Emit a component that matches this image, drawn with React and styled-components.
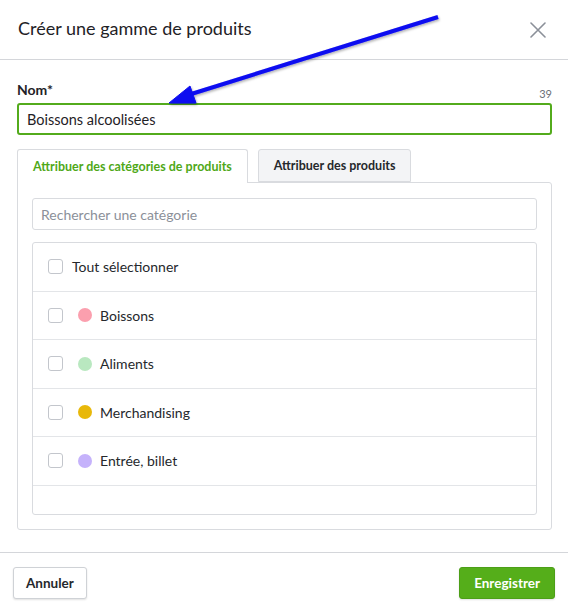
import React from "react";
import styled, { createGlobalStyle } from "styled-components";

const GlobalStyle = createGlobalStyle`
  html, body {
    margin: 0;
    padding: 0;
    background: #fff;
  }
  body {
    font-family: "Lato", "Liberation Sans", sans-serif;
    color: #25282c;
  }
  * {
    box-sizing: border-box;
  }
`;

const categories = [
  { name: "Boissons", color: "#fb9fae" },
  { name: "Aliments", color: "#b9e8c0" },
  { name: "Merchandising", color: "#e8b80a" },
  { name: "Entrée, billet", color: "#c5b2fb" },
];

export default function App() {
  return (
    <Modal>
      <GlobalStyle />
      <Header>
        <Title>Créer une gamme de produits</Title>
        <CloseButton aria-label="Fermer">
          <svg width="16" height="16" viewBox="0 0 16 16">
            <path
              d="M1 1 L15 15 M15 1 L1 15"
              stroke="#8b9099"
              strokeWidth="1.6"
              strokeLinecap="round"
            />
          </svg>
        </CloseButton>
      </Header>

      <Body>
        <LabelRow>
          <Label>Nom*</Label>
          <Counter>39</Counter>
        </LabelRow>
        <NameInput defaultValue="Boissons alcoolisées" />

        <Tabs>
          <Tab active>Attribuer des catégories de produits</Tab>
          <Tab>Attribuer des produits</Tab>
        </Tabs>
        <TabPanel>
          <SearchInput placeholder="Rechercher une catégorie" />
          <List>
            <Row>
              <Checkbox />
              <RowText>Tout sélectionner</RowText>
            </Row>
            {categories.map((item) => (
              <Row key={item.name}>
                <Checkbox />
                <Dot color={item.color} />
                <RowText>{item.name}</RowText>
              </Row>
            ))}
            <EmptyRow />
          </List>
        </TabPanel>
      </Body>

      <Footer>
        <Button>Annuler</Button>
        <Button primary>Enregistrer</Button>
      </Footer>

      <Arrow width="568" height="120" viewBox="0 0 568 120">
        <defs>
          <filter id="shadow" x="-10%" y="-50%" width="120%" height="200%">
            <feDropShadow dx="1" dy="1.5" stdDeviation="1" floodColor="#000" floodOpacity="0.3" />
          </filter>
        </defs>
        <g filter="url(#shadow)" fill="#0a0af0" stroke="#0a0af0">
          <line x1="438" y1="17" x2="188" y2="95" strokeWidth="4" />
          <polygon points="169,103 190,86 196,103" strokeWidth="1" strokeLinejoin="round" />
        </g>
      </Arrow>
    </Modal>
  );
}

const Modal = styled.div`
  position: relative;
  width: 568px;
  height: 610px;
  display: flex;
  flex-direction: column;
  background: #fff;
`;

const Header = styled.div`
  height: 60px;
  display: flex;
  align-items: center;
  justify-content: space-between;
  padding: 0 22px 0 18px;
  border-bottom: 1px solid #d4d6da;
`;

const Title = styled.h1`
  margin: 0 0 3px;
  font-size: 18px;
  font-weight: 400;
  color: #1f2226;
`;

const CloseButton = styled.button`
  border: 0;
  background: none;
  padding: 0;
  display: flex;
  cursor: pointer;
`;

const Body = styled.div`
  padding: 21px 16px 0 17px;
  display: flex;
  flex-direction: column;
`;

const LabelRow = styled.div`
  display: flex;
  justify-content: space-between;
  align-items: flex-end;
  height: 19px;
  margin-bottom: 3px;
`;

const Label = styled.span`
  font-size: 14px;
  font-weight: 700;
  color: #1f2226;
  line-height: 14px;
  margin-bottom: 3px;
`;

const Counter = styled.span`
  font-size: 11px;
  color: #6c7079;
  line-height: 12px;
`;

const NameInput = styled.input`
  width: 100%;
  height: 32px;
  border: 2px solid #53ab1c;
  border-radius: 3px;
  padding: 0 8px;
  font-family: inherit;
  font-size: 14.5px;
  color: #1f2226;
  outline: none;
`;

const Tabs = styled.div`
  display: flex;
  gap: 10px;
  margin-top: 14px;
  position: relative;
  z-index: 1;
`;

const Tab = styled.div`
  height: ${(p) => (p.active ? "34px" : "33px")};
  padding: 0 15px;
  display: flex;
  align-items: center;
  font-size: 12.5px;
  font-weight: 700;
  border: 1px solid #d9dbdf;
  border-bottom: ${(p) => (p.active ? "0" : "1px solid #d9dbdf")};
  border-radius: 3px 3px 0 0;
  background: ${(p) => (p.active ? "#fff" : "#f3f4f6")};
  color: ${(p) => (p.active ? "#4fa818" : "#25282c")};
`;

const TabPanel = styled.div`
  margin-top: -1px;
  height: 348px;
  border: 1px solid #d9dbdf;
  border-radius: 0 3px 3px 3px;
  padding: 15px 14px 14px 14px;
  display: flex;
  flex-direction: column;
  gap: 12px;
`;

const SearchInput = styled.input`
  width: 100%;
  height: 32px;
  border: 1px solid #d9dbdf;
  border-radius: 3px;
  padding: 0 8px;
  font-family: inherit;
  font-size: 14px;
  outline: none;
  &::placeholder {
    color: #8b9099;
  }
`;

const List = styled.div`
  flex: 1;
  border: 1px solid #d9dbdf;
  border-radius: 3px;
  display: flex;
  flex-direction: column;
`;

const Row = styled.div`
  height: 48.5px;
  flex-shrink: 0;
  display: flex;
  align-items: center;
  padding-left: 15px;
  border-bottom: 1px solid #e3e5e8;
`;

const EmptyRow = styled.div`
  flex: 1;
`;

const Checkbox = styled.span`
  width: 15px;
  height: 15px;
  border: 1px solid #c3c6cc;
  border-radius: 3px;
  background: #fff;
  flex-shrink: 0;
  margin-right: 9px;
`;

const Dot = styled.span`
  width: 14px;
  height: 14px;
  border-radius: 50%;
  background: ${(p) => p.color};
  margin: 0 8px 0 6px;
  flex-shrink: 0;
`;

const RowText = styled.span`
  font-size: 14px;
  color: #25282c;
`;

const Footer = styled.div`
  height: 58px;
  border-top: 1px solid #d4d6da;
  display: flex;
  align-items: flex-start;
  justify-content: space-between;
  padding: 14px 13px 0 13px;
  margin-top: 22px;
`;

const Button = styled.button`
  height: 32px;
  padding: 0 ${(p) => (p.primary ? "14px" : "12px")};
  border-radius: 3px;
  font-family: inherit;
  font-size: 13.5px;
  font-weight: 700;
  cursor: pointer;
  border: 1px solid ${(p) => (p.primary ? "#4c9f17" : "#cfd2d6")};
  background: ${(p) => (p.primary ? "#55ae1a" : "#fff")};
  color: ${(p) => (p.primary ? "#fff" : "#25282c")};
  box-shadow: 0 1px 2px rgba(0, 0, 0, 0.12);
`;

const Arrow = styled.svg`
  position: absolute;
  top: 0;
  left: 0;
  pointer-events: none;
`;
